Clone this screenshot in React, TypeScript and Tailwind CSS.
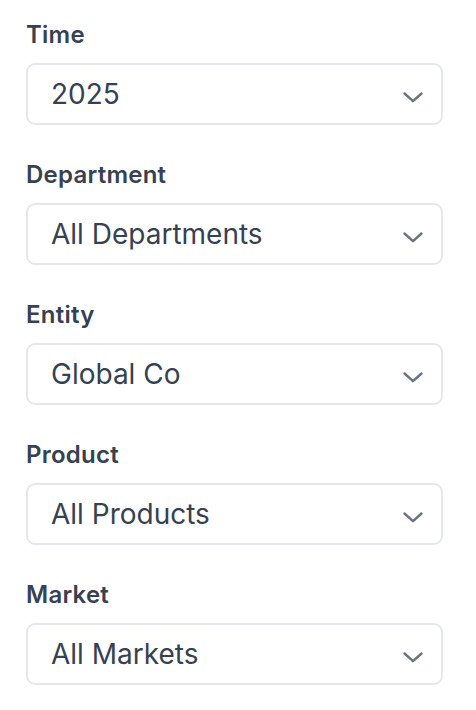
const filters = [
  { label: "Time", value: "2025" },
  { label: "Department", value: "All Departments" },
  { label: "Entity", value: "Global Co" },
  { label: "Product", value: "All Products" },
  { label: "Market", value: "All Markets" },
];

function Chevron() {
  return (
    <svg width="20" height="11" viewBox="0 0 20 11" fill="none" className="mt-[6px] shrink-0">
      <path
        d="M1.5 1.5 L10 9.2 L18.5 1.5"
        stroke="#6b7280"
        strokeWidth="2.4"
        strokeLinecap="round"
        strokeLinejoin="round"
      />
    </svg>
  );
}

export default function App() {
  return (
    <div className="min-h-screen bg-white pl-[26px] pr-[33px] pt-[19px] font-['Inter',sans-serif]">
      <div className="flex flex-col gap-[34px]">
        {filters.map((f) => (
          <div key={f.label}>
            <label className="block text-[24px] leading-[32px] font-semibold tracking-[0.01em] text-[#374151]">
              {f.label}
            </label>
            <div className="mt-[12px] flex h-[62px] items-center justify-between rounded-[9px] border-2 border-[#e5e7eb] bg-white pl-[23px] pr-[18px]">
              <span className="text-[28px] leading-[36px] text-[#374151]">{f.value}</span>
              <Chevron />
            </div>
          </div>
        ))}
      </div>
    </div>
  );
}
